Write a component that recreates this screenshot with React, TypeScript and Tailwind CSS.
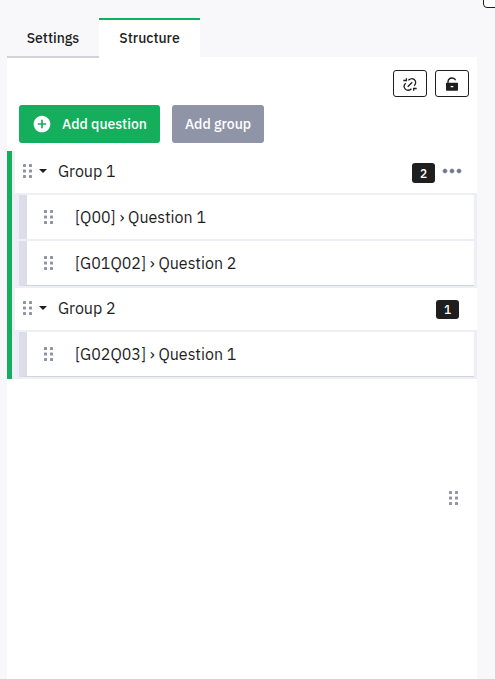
import { ReactNode } from "react";
import { RiAddCircleFill, RiLockUnlockFill, RiMoreFill } from "react-icons/ri";

type Question = { code: string; title: string };
type Group = { name: string; questions: Question[]; menu?: boolean };

const groups: Group[] = [
  {
    name: "Group 1",
    menu: true,
    questions: [
      { code: "Q00", title: "Question 1" },
      { code: "G01Q02", title: "Question 2" },
    ],
  },
  { name: "Group 2", questions: [{ code: "G02Q03", title: "Question 1" }] },
];

function DragHandle() {
  return (
    <svg width="9" height="14" viewBox="0 0 9 14" fill="#9094a7" className="shrink-0">
      {[0, 5.5, 11].map((y) => (
        <g key={y}>
          <rect x="0" y={y} width="3" height="3" rx="0.6" />
          <rect x="6" y={y} width="3" height="3" rx="0.6" />
        </g>
      ))}
    </svg>
  );
}

function UnlinkIcon() {
  return (
    <svg
      width="14"
      height="13"
      viewBox="0 0 14 13"
      fill="none"
      stroke="currentColor"
      strokeWidth="1.3"
    >
      <path d="M5.3 2.3C7 .5 9.8.2 11.5 1.8s1.5 4.2-.3 5.9" />
      <path d="M2.7 5.2C.9 6.9.7 9.4 2.3 11.1s4.4 1.5 6.1-.3" />
      <path d="M4.7 8.7 9.2 4.2" />
      <path d="M3.4.3v2.2H.3M13.7 10.5h-3.1v2.2" />
    </svg>
  );
}

function IconButton({ children }: { children: ReactNode }) {
  return (
    <button className="flex h-[27px] w-[34px] items-center justify-center rounded-[3px] border border-[#1e1e1e] bg-white pt-px text-[#1e1e1e]">
      {children}
    </button>
  );
}

function QuestionRow({ question, last }: { question: Question; last: boolean }) {
  return (
    <li
      className={`mr-[3px] ml-1 flex items-center border-l-8 border-l-[#dddde8] bg-white pl-[17px] ${
        last ? "h-[45px] border-b border-b-[#d3d4db]" : "h-11"
      }`}
    >
      <DragHandle />
      <span className="ml-[22px] text-base leading-6 whitespace-nowrap">
        [{question.code}] › {question.title}
      </span>
    </li>
  );
}

function GroupBlock({ group }: { group: Group }) {
  return (
    <li>
      <div className="flex h-[42px] items-center bg-white pr-[14px] pb-[2px] pl-2">
        <DragHandle />
        <svg width="8" height="4" viewBox="0 0 8 4" className="ml-[7px]">
          <path d="M0 0h8L4 4z" fill="#1e1e1e" />
        </svg>
        <span className="ml-[11px] text-base leading-6">{group.name}</span>
        <span
          className={`ml-auto flex w-[23px] items-center justify-center rounded-[3px] bg-[#1e1e1e] text-[12px] leading-none font-medium text-white ${
            group.menu ? "mt-1 h-5 pt-[2px]" : "mt-[3px] mr-1 h-[19px] pt-px"
          }`}
        >
          {group.questions.length}
        </span>
        {group.menu && (
          <RiMoreFill
            size={24}
            stroke="currentColor"
            strokeWidth={0.6}
            className="-mr-px ml-[5px] text-[#6e748c]"
          />
        )}
      </div>
      <ul className="flex flex-col gap-[2px] py-[2px]">
        {group.questions.map((question, index) => (
          <QuestionRow
            key={question.code}
            question={question}
            last={index === group.questions.length - 1}
          />
        ))}
      </ul>
    </li>
  );
}

export default function App() {
  return (
    <div className="relative h-[679px] w-[495px] overflow-hidden bg-[#f8f8fb] pl-[7px] font-['IBM_Plex_Sans','Noto_Sans',sans-serif] text-[#1e1e1e]">
      <div className="absolute -top-4 left-[483px] h-6 w-8 rounded-[4px] border border-[#1e1e1e] bg-white" />

      <aside className="flex h-full w-[470px] flex-col">
        <nav className="z-10 flex h-[58px] shrink-0 items-end text-sm font-medium">
          <button className="h-10 w-[92px] border-b-2 border-[#d2d2d8] pt-[2px]">
            Settings
          </button>
          <button className="h-10 w-[101px] border-t-2 border-[#14ae5c] bg-white pb-[2px]">
            Structure
          </button>
        </nav>

        <div className="-mt-px flex-1 bg-white pt-[13px]">
          <div className="flex justify-end gap-2 pr-2">
            <IconButton>
              <UnlinkIcon />
            </IconButton>
            <IconButton>
              <RiLockUnlockFill size={16} />
            </IconButton>
          </div>

          <div className="mt-2 flex gap-3 pl-3 text-sm font-medium whitespace-nowrap text-white">
            <button className="flex h-[38px] w-[141px] items-center rounded-[3px] bg-[#14ae5c] pl-[13px]">
              <RiAddCircleFill size={20} className="shrink-0" />
              <span className="ml-[10px]">Add question</span>
            </button>
            <button className="h-[38px] w-[92px] rounded-[3px] bg-[#9094a7]">
              Add group
            </button>
          </div>

          <ul className="mt-2 border-l-[5px] border-[#14ae5c] bg-[#eeeef6] pl-[3px]">
            {groups.map((group) => (
              <GroupBlock key={group.name} group={group} />
            ))}
          </ul>

          <div className="mt-28 flex justify-end pr-[19px]">
            <DragHandle />
          </div>
        </div>
      </aside>
    </div>
  );
}
